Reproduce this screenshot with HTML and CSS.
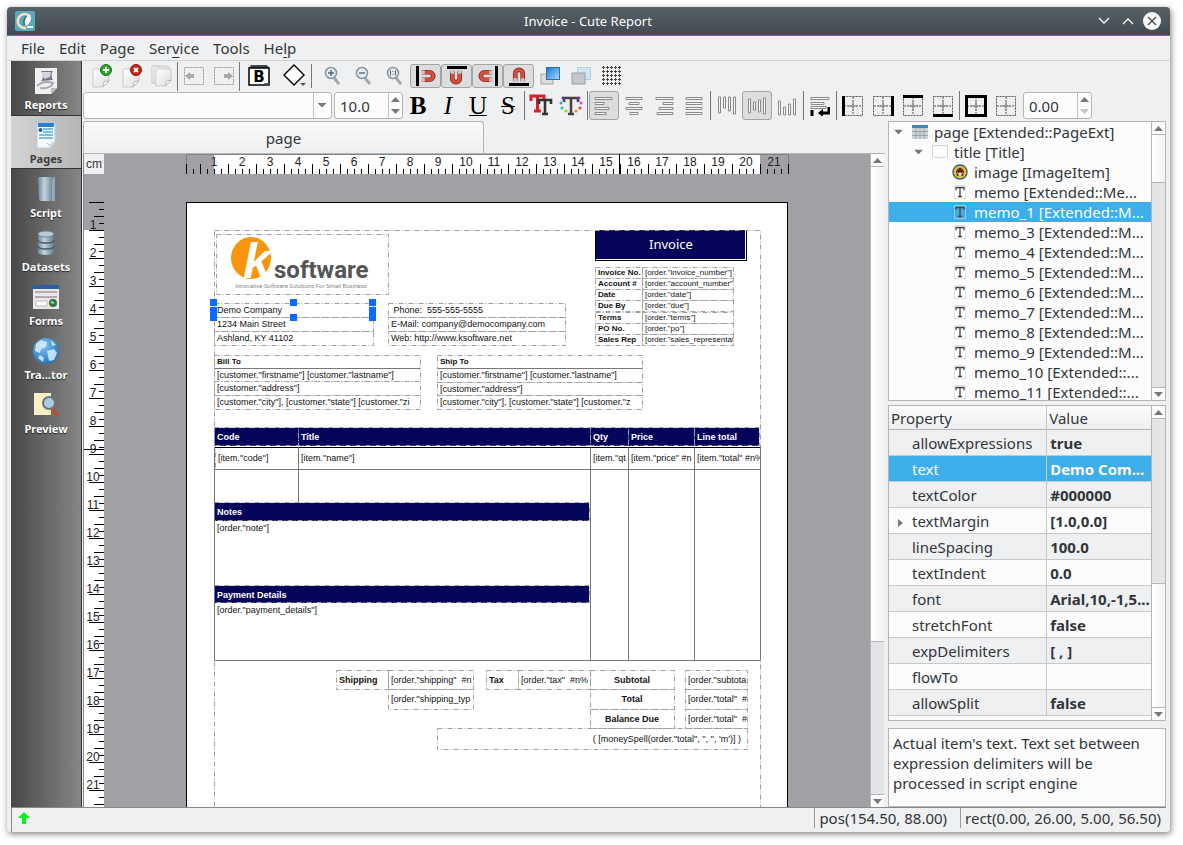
FILE: index.html
```
<!DOCTYPE html>
<html lang="en">
<head>
    <meta charset="UTF-8">
    <meta name="viewport" content="width=device-width, initial-scale=1.0">
    <title>Invoice - Cute Report</title>
    <link rel="stylesheet" href="styles.css">
</head>
<body>
    <!-- Shared icons -->
    <svg class="defs" aria-hidden="true">
        <defs>
            <linearGradient id="gPaper" x1="0" y1="0" x2="1" y2="1"><stop offset="0" stop-color="#fff"/><stop offset="1" stop-color="#dcdcdc"/></linearGradient>
            <linearGradient id="gBlue" x1="0" y1="0" x2="1" y2="1"><stop offset="0" stop-color="#1878d0"/><stop offset="1" stop-color="#a8dcff"/></linearGradient>
            <linearGradient id="gSteel" x1="0" y1="0" x2="1" y2="0"><stop offset="0" stop-color="#6f8797"/><stop offset=".4" stop-color="#c3d3de"/><stop offset="1" stop-color="#64798a"/></linearGradient>
            <radialGradient id="gGlobe" cx=".4" cy=".3" r=".8"><stop offset="0" stop-color="#7cc4f4"/><stop offset="1" stop-color="#1a68b4"/></radialGradient>
            <symbol id="paper" viewBox="0 0 18 20"><path d="M1 1h16v12l-6 6H1z" fill="url(#gPaper)" stroke="#c9c9c9"/><path d="M17 13q-5 0-5 1t-1 5z" fill="#fff" stroke="#b5b5b5"/></symbol>
            <symbol id="magnet" viewBox="0 0 16 14"><path d="M1 3h8a4 4 0 0 1 0 8H1" fill="none" stroke="#8e2a20" stroke-width="5"/><path d="M1 3h8a4 4 0 0 1 0 8H1" fill="none" stroke="#d9503f" stroke-width="3"/><path d="M0 1h4v4H0zM0 9h4v4H0z" fill="#c9c4d8"/></symbol>
            <symbol id="lens" viewBox="0 0 18 20"><path d="M10 12l5 6" stroke="#a9a9a9" stroke-width="3"/><circle cx="7" cy="7" r="5.500" fill="#e3edf2" stroke="#8795a0" stroke-width="1.500"/></symbol>
            <symbol id="cells" viewBox="0 0 22 22"><path d="M1.500 1.500h19v19h-19zM11 2v18M2 11h18" fill="none" stroke="#555" stroke-dasharray="2 1"/><path d="M6 11h10M11 6v10" stroke="#888"/></symbol>
            <symbol id="memo" viewBox="0 0 12 14"><path d="M.5 .5h11v13H.5z" fill="none" stroke="#d4d4dd" stroke-dasharray="2 1"/><path d="M2 5V2.500h8V5M6 2.500v9M4 11.500h4" fill="none" stroke="#444" stroke-width="1.300"/></symbol>
            <symbol id="up" viewBox="0 0 9 5"><path d="M0 5L4.500 0 9 5z" fill="#777"/></symbol>
            <symbol id="down" viewBox="0 0 9 5"><path d="M0 0l4.500 5L9 0z" fill="#777"/></symbol>
        </defs>
    </svg>

    <div class="window">
        <header class="titlebar">
            <svg width="20" height="20" viewBox="0 0 20 20"><rect width="20" height="20" rx="2" fill="#57a9bd"/><path d="M14 4.500A7 7 0 1 0 11 17" fill="none" stroke="#f1dfc3" stroke-width="2.600"/><path d="M15 3q3 8-4 12-4-6 4-12z" fill="#fff8e8"/><path d="M12 16h6" stroke="#fff8e8" stroke-width="2"/><path d="M9 14q-1-5 2-9" stroke="#3b4c50" stroke-width="1" fill="none"/></svg>
            <h1>Invoice - Cute Report</h1>
            <div class="winbtns">
                <button aria-label="Minimize"><svg width="12" height="8" viewBox="0 0 12 8"><path d="M1 1l5 5 5-5" fill="none" stroke="#fcfcfc" stroke-width="1.300"/></svg></button>
                <button aria-label="Maximize"><svg width="12" height="8" viewBox="0 0 12 8"><path d="M1 7l5-5 5 5" fill="none" stroke="#fcfcfc" stroke-width="1.300"/></svg></button>
                <button aria-label="Close"><svg width="18" height="18" viewBox="0 0 18 18"><circle cx="9" cy="9" r="9" fill="#fcfcfc"/><path d="M5 5l8 8M13 5l-8 8" stroke="#475057" stroke-width="1.500"/></svg></button>
            </div>
        </header>

        <nav class="menubar">
            <button>File</button>
            <button>Edit</button>
            <button>Page</button>
            <button>Ser<u>v</u>ice</button>
            <button>Tools</button>
            <button>He<u>l</u>p</button>
        </nav>

        <div class="main">
            <!-- Modules -->
            <nav class="modules">
                <button><svg width="26" height="28" viewBox="0 0 26 28"><path d="M2 1h22v20l-6 6H2z" fill="#f0f0f2"/><path d="M8 4h12q-3 4 0 9l-12 1q4-5 0-10z" fill="#77757f"/><path d="M9 5h9l-1 5-6 2z" fill="#d7d5dd"/><path d="M4 19q6-6 16-3-2 6-13 5" fill="none" stroke="#aaa8b2" stroke-width="2"/><path d="M24 21h-6v6z" fill="#bbb"/></svg>Reports</button>
                <button class="active"><svg width="26" height="28" viewBox="0 0 26 28"><path d="M4 2h18v19l-5 6H4z" fill="#f5faff" stroke="#b6cbdc"/><path d="M5 2h16v4H5z" fill="#2c7fce"/><path d="M10 8h10M10 11h10M6 14h14M6 17h14" stroke="#55a9e4" stroke-width="1.600"/><circle cx="7.500" cy="9" r="2" fill="#1761a8"/><path d="M14 22l3 3 3-4" fill="none" stroke="#a5b4c0"/></svg>Pages</button>
                <button><svg width="26" height="28" viewBox="0 0 26 28"><path d="M5 3q0-1 2-1h14q-2 2-2 5v18q0 1 2 1H8q-2 0-2-3z" fill="url(#gSteel)"/><path d="M19 7q0-5 3-5v24h-3z" fill="#8fa8c0"/></svg>Script</button>
                <button><svg width="26" height="28" viewBox="0 0 26 28"><path d="M5 5v18q0 3 8 3t8-3V5z" fill="url(#gSteel)"/><ellipse cx="13" cy="5" rx="8" ry="3" fill="#b9cbd5" stroke="#6f8592"/><path d="M5 11q0 3 8 3t8-3M5 17q0 3 8 3t8-3" fill="none" stroke="#3f5563" stroke-width="1.300"/></svg>Datasets</button>
                <button><svg width="26" height="28" viewBox="0 0 26 28"><path d="M0 2h26v24H0z" fill="#e8e8ea"/><path d="M0 2h26v4H0z" fill="#2d5ca6"/><path d="M2 9h22M2 14h22" stroke="#b9a9b5" stroke-width="2"/><path d="M3 18h11v5H3z" fill="#fff" stroke="#bbb"/><circle cx="20" cy="20" r="4" fill="#2f7a38"/><path d="M18 19l3 1" stroke="#a6dca9" stroke-width="2"/></svg>Forms</button>
                <button><svg width="28" height="28" viewBox="0 0 28 28"><circle cx="14" cy="14" r="13" fill="url(#gGlobe)"/><path d="M4 7l5-4 6 2-1 5-5 2-1 4-5-2zM15 14l7-2 3 4-3 7-5 1zM19 3l5 5-4 1zM8 18l4 3-1 4-5-4z" fill="#dceffb" opacity=".85"/></svg>Tra...tor</button>
                <button><svg width="26" height="28" viewBox="0 0 26 28"><path d="M1 2h17v22H1z" fill="#f7e3a0"/><path d="M1 2h17l-3 22H1z" fill="#fbefc4"/><path d="M19 17l6 8" stroke="#c24a2a" stroke-width="3"/><circle cx="16" cy="12" r="6" fill="#a9cbdc" stroke="#67767f" stroke-width="2"/></svg>Preview</button>
            </nav>

            <div class="content">
                <div class="toolbar upper">
                    <div class="group pages-group">
                        <button aria-label="New page"><svg width="24" height="24" viewBox="0 0 24 24"><use href="#paper" x="2" y="4" width="18" height="20"/><circle cx="16" cy="6" r="5.500" fill="#2fa22f" stroke="#1a701a"/><path d="M16 3v6M13 6h6" stroke="#fff" stroke-width="1.800"/></svg></button>
                        <button aria-label="Delete page"><svg width="24" height="24" viewBox="0 0 24 24"><use href="#paper" x="2" y="4" width="18" height="20"/><circle cx="16" cy="6" r="5.500" fill="#c22418" stroke="#8a130c"/><path d="M14 4l4 4M18 4l-4 4" stroke="#fff" stroke-width="1.800"/></svg></button>
                        <button aria-label="Clone page"><svg width="24" height="24" viewBox="0 0 24 24"><use href="#paper" x="1" y="1" width="17" height="19"/><use href="#paper" x="3" y="2" width="17" height="19"/><use href="#paper" x="5" y="4" width="17" height="19"/></svg></button>
                    </div>
                    <div class="group">
                        <button aria-label="Previous page"><svg width="22" height="20" viewBox="0 0 22 20"><rect x="1.500" y="1.500" width="19" height="17" fill="none" stroke="#999" stroke-dasharray="2 1"/><path d="M2 10l5-4v2h4v4H7v2z" fill="#aaa"/></svg></button>
                        <button aria-label="Next page"><svg width="22" height="20" viewBox="0 0 22 20"><rect x="1.500" y="1.500" width="19" height="17" fill="none" stroke="#999" stroke-dasharray="2 1"/><path d="M20 10l-5-4v2h-4v4h4v2z" fill="#aaa"/></svg></button>
                    </div>
                    <div class="group wide">
                        <button aria-label="Bands"><svg width="24" height="24" viewBox="0 0 24 24"><path d="M4 1h16l2 3H2z" fill="#444"/><rect x="2" y="4" width="20" height="17" fill="#fff" stroke="#000" stroke-width="1.500"/><text x="12" y="18" text-anchor="middle" class="ico-b">B</text><path d="M17 19h6l-3 3z" fill="#555"/></svg></button>
                        <button aria-label="Shapes"><svg width="24" height="24" viewBox="0 0 24 24"><path d="M12 1l10 10-10 10L2 11z" fill="#fff" stroke="#000" stroke-width="1.400"/><path d="M18 19h6l-3 3z" fill="#555"/></svg></button>
                    </div>
                    <div class="group roomy">
                        <button aria-label="Zoom in"><svg width="18" height="20" viewBox="0 0 18 20"><use href="#lens" width="18" height="20"/><path d="M4 7h6M7 4v6" stroke="#55636d" stroke-width="1.400"/></svg></button>
                        <button aria-label="Zoom out"><svg width="18" height="20" viewBox="0 0 18 20"><use href="#lens" width="18" height="20"/><path d="M4 7h6" stroke="#55636d" stroke-width="1.400"/></svg></button>
                        <button aria-label="Zoom 1:1"><svg width="18" height="20" viewBox="0 0 18 20"><use href="#lens" width="18" height="20"/><path d="M4.500 4.500v5M9.500 4.500v5M7 5v1M7 8v1" stroke="#55636d"/></svg></button>
                        <button class="on" aria-label="Snap left"><svg width="22" height="22" viewBox="0 0 22 22"><path d="M1 1h3v20H1z"/><use href="#magnet" x="6" y="4" width="15" height="14"/></svg></button>
                        <button class="on" aria-label="Snap top"><svg width="22" height="22" viewBox="0 0 22 22"><path d="M1 1h20v3H1z"/><use href="#magnet" x="4" y="6" width="15" height="14" transform="rotate(90 11 12)"/></svg></button>
                        <button class="on" aria-label="Snap right"><svg width="22" height="22" viewBox="0 0 22 22"><path d="M18 1h3v20h-3z"/><use href="#magnet" x="6" y="4" width="15" height="14" transform="rotate(180 11 11)"/></svg></button>
                        <button class="on" aria-label="Snap bottom"><svg width="22" height="22" viewBox="0 0 22 22"><path d="M1 18h20v3H1z"/><use href="#magnet" x="4" y="3" width="15" height="14" transform="rotate(-90 11 10)"/></svg></button>
                        <button aria-label="Bring to front"><svg width="20" height="20" viewBox="0 0 20 20"><rect x="1" y="8" width="12" height="10" fill="#dcdcdc" stroke="#a5a5a5"/><rect x="6.500" y="1.500" width="13" height="12" fill="url(#gBlue)" stroke="#2c6fab"/></svg></button>
                        <button aria-label="Send to back"><svg width="20" height="20" viewBox="0 0 20 20"><rect x="6.500" y="1.500" width="13" height="12" fill="#cfe6f5" stroke="#b0cfe2"/><rect x="1" y="7" width="13" height="11" fill="#c3c6cb" stroke="#9da1a6"/></svg></button>
                        <button aria-label="Grid"><svg width="20" height="20" viewBox="0 0 20 20"><path d="M0 1.500h20M0 5.500h20M0 9.500h20M0 13.500h20M0 17.500h20" stroke="#444" stroke-dasharray="3 1"/><path d="M1.500 0v20M5.500 0v20M9.500 0v20M13.500 0v20M17.500 0v20" stroke="#444" stroke-dasharray="1 1"/></svg></button>
                    </div>
                </div>

                <div class="toolbar lower">
                    <select class="font-family" aria-label="Font"><option></option></select>
                    <div class="spin">
                        <input type="text" value="10.0" aria-label="Font size">
                        <div class="steps"><button aria-label="Larger"><svg width="9" height="5"><use href="#up"/></svg></button><button aria-label="Smaller"><svg width="9" height="5"><use href="#down"/></svg></button></div>
                    </div>
                    <div class="group letters">
                        <button class="b">B</button>
                        <button class="i">I</button>
                        <button class="u">U</button>
                        <button class="s">S</button>
                    </div>
                    <div class="group">
                        <button aria-label="Font dialog"><svg width="24" height="24" viewBox="0 0 24 24"><path d="M2 7V2h13v5M8.500 2v15M5 17h7" fill="none" stroke="#d3222a" stroke-width="3"/><path d="M10 10V6h12v4M16 6v14M13 20h6" fill="none" stroke="#333" stroke-width="2.600"/></svg></button>
                        <button aria-label="Text colour"><svg width="24" height="24" viewBox="0 0 24 24"><path d="M5 8V4h14v4M12 4v16M9 20h6" fill="none" stroke="#444" stroke-width="2.600"/><g><circle cx="4" cy="4" r="1.500" fill="#5b37d8"/><circle cx="2" cy="9" r="1.500" fill="#26a7e0"/><circle cx="3" cy="14" r="1.500" fill="#27c98a"/><circle cx="7" cy="17" r="1.500" fill="#8fd62a"/><circle cx="20" cy="4" r="1.500" fill="#a229d8"/><circle cx="22" cy="9" r="1.500" fill="#e83cc4"/><circle cx="21" cy="14" r="1.500" fill="#e8373c"/><circle cx="17" cy="17" r="1.500" fill="#f08a24"/></g></svg></button>
                    </div>
                    <div class="group lines">
                        <button class="on" aria-label="Align left"><svg width="20" height="20" viewBox="0 0 20 20"><path d="M1 1.500h17v2H1zM1 6.500h9v2H1zM1 11.500h14v2H1zM1 16.500h11v2H1z"/></svg></button>
                        <button aria-label="Align centre"><svg width="20" height="20" viewBox="0 0 20 20"><path d="M2 1.500h16v2H2zM5 6.500h10v2H5zM2 11.500h16v2H2zM6 16.500h8v2H6z"/></svg></button>
                        <button aria-label="Align right"><svg width="20" height="20" viewBox="0 0 20 20"><path d="M2 1.500h17v2H2zM9 6.500h10v2H9zM5 11.500h14v2H5zM3 16.500h16v2H3z"/></svg></button>
                        <button aria-label="Justify"><svg width="20" height="20" viewBox="0 0 20 20"><path d="M2 1.500h16v2H2zM2 6.500h16v2H2zM2 11.500h16v2H2zM2 16.500h16v2H2z"/></svg></button>
                    </div>
                    <div class="group lines">
                        <button aria-label="Align top"><svg width="20" height="20" viewBox="0 0 20 20"><path d="M1.500 1h2v16h-2zM6.500 1h2v11h-2zM11.500 1h2v14h-2zM16.500 1h2v17h-2z"/></svg></button>
                        <button class="on" aria-label="Align middle"><svg width="20" height="20" viewBox="0 0 20 20"><path d="M1.500 3h2v14h-2zM6.500 6h2v8h-2zM11.500 4h2v12h-2zM16.500 2h2v16h-2z"/></svg></button>
                        <button aria-label="Align bottom"><svg width="20" height="20" viewBox="0 0 20 20"><path d="M1.500 5h2v14h-2zM6.500 11h2v8h-2zM11.500 8h2v11h-2zM16.500 3h2v16h-2z"/></svg></button>
                    </div>
                    <div class="group lines">
                        <button aria-label="Word wrap"><svg width="20" height="20" viewBox="0 0 20 20"><path d="M1 1.500h18v2H1zM1 6.500h13v2H1zM1 10.500h15v2H1z"/><path class="arrow" d="M2 14v6M19 11v6h-8"/><path class="tip" d="M8 17l5-4v8z"/></svg></button>
                    </div>
                    <div class="group">
                        <button aria-label="Left border"><svg width="22" height="22"><use href="#cells"/><path d="M0 1h3v20H0z"/></svg></button>
                        <button aria-label="Right border"><svg width="22" height="22"><use href="#cells"/><path d="M19 1h3v20h-3z"/></svg></button>
                        <button aria-label="Top border"><svg width="22" height="22"><use href="#cells"/><path d="M1 0h20v3H1z"/></svg></button>
                        <button aria-label="Bottom border"><svg width="22" height="22"><use href="#cells"/><path d="M1 19h20v3H1z"/></svg></button>
                    </div>
                    <div class="group">
                        <button aria-label="All borders"><svg width="22" height="22"><use href="#cells"/><path d="M1.500 1.500h19v19h-19z" fill="none" stroke="#000" stroke-width="3"/></svg></button>
                        <button aria-label="No borders"><svg width="22" height="22"><use href="#cells"/></svg></button>
                    </div>
                    <div class="spin">
                        <input type="text" value="0.00" aria-label="Border width">
                        <div class="steps"><button aria-label="Wider"><svg width="9" height="5"><use href="#up"/></svg></button><button aria-label="Thinner" disabled><svg width="9" height="5"><use href="#down"/></svg></button></div>
                    </div>
                </div>

                <div class="work">
                    <section class="editor">
                        <div class="tabs"><button>page</button></div>
                        <div class="designer">
                            <div class="unit">cm</div>
                            <div class="ruler-top"><svg id="rulerTop" width="603" height="20"></svg></div>
                            <div class="ruler-left"><svg id="rulerLeft" width="20" height="840"></svg></div>
                            <div class="canvas">
                                <div class="sheet" id="reportPage">
                                    <svg id="frames" class="frames" width="602" height="840"></svg>
                                    <svg class="logo" width="172" height="60" viewBox="0 0 172 60">
                                        <ellipse cx="35" cy="24" rx="20" ry="21" fill="#f7960e"/>
                                        <text x="27" y="44" class="logo-k">k</text>
                                        <text x="58" y="44" class="logo-name">software</text>
                                        <text x="85" y="54" text-anchor="middle" class="logo-line">Innovative Software Solutions For Small Business</text>
                                    </svg>
                                </div>
                            </div>
                            <div class="scroll editor-scroll"><button aria-label="Scroll up"><svg width="9" height="5"><use href="#up"/></svg></button><div class="thumb"></div><div class="trough"></div><button aria-label="Scroll down"><svg width="9" height="5"><use href="#down"/></svg></button></div>
                        </div>
                    </section>

                    <aside class="panels">
                        <div class="panel tree">
                            <ul>
                                <li class="l0"><svg width="9" height="6" viewBox="0 0 9 5"><use href="#down"/></svg><svg width="16" height="14" viewBox="0 0 16 14"><path d="M0 0h16v14H0z" fill="#cfd6db"/><path d="M0 0h16v3H0z" fill="#3c87b8"/><path d="M0 6.500h16M0 10.500h16M4 3v11M8 3v11M12 3v11" stroke="#96a3ab"/></svg>page [Extended::PageExt]</li>
                                <li class="l1"><svg width="9" height="6" viewBox="0 0 9 5"><use href="#down"/></svg><svg width="16" height="14" viewBox="0 0 16 14"><path d="M.5 .5h15v11q-7 3-15 0z" fill="#fff" stroke="#d3d0d3"/></svg>title [Title]</li>
                                <li class="l2"><svg width="16" height="16" viewBox="0 0 16 16"><circle cx="8" cy="8" r="7" fill="#e9bd35" stroke="#3f6684" stroke-width="1.500"/><path d="M4 7q4-7 8 0l-1 5H5z" fill="#663420"/><path d="M5 8h6l-2 4H7z" fill="#f0cda0"/><circle cx="6.500" cy="8" r="1" fill="#111"/><circle cx="9.500" cy="8" r="1" fill="#111"/></svg>image [ImageItem]</li>
                                <li class="l2"><svg width="12" height="14"><use href="#memo"/></svg>memo [Extended::Me...</li>
                                <li class="l2 selected"><svg width="12" height="14"><use href="#memo"/></svg>memo_1 [Extended::M...</li>
                                <li class="l2"><svg width="12" height="14"><use href="#memo"/></svg>memo_3 [Extended::M...</li>
                                <li class="l2"><svg width="12" height="14"><use href="#memo"/></svg>memo_4 [Extended::M...</li>
                                <li class="l2"><svg width="12" height="14"><use href="#memo"/></svg>memo_5 [Extended::M...</li>
                                <li class="l2"><svg width="12" height="14"><use href="#memo"/></svg>memo_6 [Extended::M...</li>
                                <li class="l2"><svg width="12" height="14"><use href="#memo"/></svg>memo_7 [Extended::M...</li>
                                <li class="l2"><svg width="12" height="14"><use href="#memo"/></svg>memo_8 [Extended::M...</li>
                                <li class="l2"><svg width="12" height="14"><use href="#memo"/></svg>memo_9 [Extended::M...</li>
                                <li class="l2"><svg width="12" height="14"><use href="#memo"/></svg>memo_10 [Extended::...</li>
                                <li class="l2"><svg width="12" height="14"><use href="#memo"/></svg>memo_11 [Extended::...</li>
                            </ul>
                            <div class="scroll tree-scroll"><button aria-label="Scroll up"><svg width="9" height="5"><use href="#up"/></svg></button><div class="thumb"></div><div class="trough"></div><button aria-label="Scroll down"><svg width="9" height="5"><use href="#down"/></svg></button></div>
                        </div>

                        <div class="panel props">
                            <table>
                                <thead>
                                    <tr><th>Property</th><th>Value</th></tr>
                                </thead>
                                <tbody>
                                    <tr><td>allowExpressions</td><td>true</td></tr>
                                    <tr class="selected"><td>text</td><td>Demo Com...</td></tr>
                                    <tr><td>textColor</td><td>#000000</td></tr>
                                    <tr class="branch"><td>textMargin</td><td>[1.0,0.0]</td></tr>
                                    <tr><td>lineSpacing</td><td>100.0</td></tr>
                                    <tr><td>textIndent</td><td>0.0</td></tr>
                                    <tr><td>font</td><td>Arial,10,-1,5...</td></tr>
                                    <tr><td>stretchFont</td><td>false</td></tr>
                                    <tr><td>expDelimiters</td><td>[ , ]</td></tr>
                                    <tr><td>flowTo</td><td></td></tr>
                                    <tr><td>allowSplit</td><td>false</td></tr>
                                </tbody>
                            </table>
                            <div class="scroll props-scroll"><button aria-label="Scroll up"><svg width="9" height="5"><use href="#up"/></svg></button><div class="trough"></div><div class="thumb"></div><button aria-label="Scroll down"><svg width="9" height="5"><use href="#down"/></svg></button></div>
                        </div>

                        <p class="panel hint">Actual item's text. Text set between expression delimiters will be processed in script engine</p>
                    </aside>
                </div>
            </div>
        </div>

        <footer class="statusbar">
            <svg width="12" height="12" viewBox="0 0 12 12"><path d="M6 0l6 6H8v6H4V6H0z" fill="#00f51a"/></svg>
            <span class="pos">pos(154.50, 88.00)</span>
            <span class="rect">rect(0.00, 26.00, 5.00, 56.50)</span>
        </footer>
    </div>

    <script src="script.js"></script>
</body>
</html>
```
FILE: styles.css
```
* {
    box-sizing: border-box;
}

body {
    margin: 0;
    padding: 7px 13px 13px 7px;
    height: 100vh;
    display: flex;
    background: #fff;
    font-family: "Noto Sans", sans-serif;
    font-size: 15px;
    line-height: 20px;
    color: #31363b;
}

button,
input,
select {
    font: inherit;
    color: inherit;
    margin: 0;
    padding: 0;
    border: 0;
    background: none;
}

.defs {
    position: absolute;
    width: 0;
    height: 0;
}

.window {
    flex: 1;
    min-width: 0;
    display: flex;
    flex-direction: column;
    background: #eff0f1;
    border-radius: 4px;
    box-shadow: 1px 2px 6px rgba(0, 0, 0, 0.5);
}

/* Title bar */
.titlebar {
    height: 29px;
    flex: none;
    display: flex;
    align-items: center;
    padding: 0 9px 0 8px;
    background: linear-gradient(#566168, #434b51);
    border-bottom: 1px solid #3a87b0;
    border-radius: 4px 4px 0 0;
    color: #fcfcfc;
}

.titlebar h1 {
    flex: 1;
    margin: 0;
    padding-left: 46px;
    font-size: 13px;
    font-weight: normal;
    text-align: center;
}

.winbtns {
    display: flex;
    align-items: center;
    gap: 6px;
}

.winbtns button {
    width: 18px;
    display: flex;
    justify-content: center;
}

/* Menu */
.menubar {
    height: 25px;
    flex: none;
    display: flex;
    padding: 0 7px;
    border-bottom: 1px solid #d2d3d4;
}

.menubar button {
    padding: 0 7px;
}

.menubar u {
    text-underline-offset: 3px;
}

.main {
    flex: 1;
    min-height: 0;
    display: flex;
    padding: 0 4px;
}

/* Modules */
.modules {
    width: 71px;
    flex: none;
    background: linear-gradient(to right, #484848, #868686);
    border-right: 1px solid #333;
}

.modules button {
    display: flex;
    flex-direction: column;
    align-items: center;
    justify-content: flex-end;
    gap: 2px;
    width: 100%;
    height: 54px;
    padding-bottom: 2px;
    font-size: 11px;
    line-height: 16px;
    font-weight: bold;
    color: #fff;
    text-shadow: 0 1px 1px #222;
}

.modules .active {
    padding-bottom: 1px;
    background: linear-gradient(to right, #d4d4d4, #b5b5b5);
    border-top: 1px solid #333;
    border-bottom: 1px solid #333;
    color: #3d3d3d;
    text-shadow: none;
}

.content {
    flex: 1;
    min-width: 0;
    display: flex;
    flex-direction: column;
    padding-left: 1px;
}

/* Toolbars */
.toolbar {
    height: 30px;
    flex: none;
    display: flex;
    align-items: center;
}

.lower {
    height: 29px;
}

.group {
    display: flex;
}

.group + .group {
    border-left: 1px solid #777;
    margin-left: 1px;
    padding-left: 1px;
}

.upper .group + .group {
    margin-left: 0;
}

.group button {
    width: 30px;
    height: 29px;
    display: flex;
    align-items: center;
    justify-content: center;
    border: 1px solid transparent;
    border-radius: 3px;
}

.group .on {
    background: #dcddde;
    border-color: #a3a4a5;
}

.pages-group {
    padding-left: 4px;
}

.wide button {
    width: 35px;
}

.upper .group.roomy {
    padding-left: 5px;
}

.roomy button {
    width: 31px;
    height: 24px;
}

.lines path {
    fill: #f6f6f6;
    stroke: #8b8b8b;
    stroke-width: 1px;
}

.lines .arrow {
    fill: none;
    stroke: #000;
    stroke-width: 3px;
}

.lines .tip {
    fill: #000;
    stroke: none;
}

.ico-b {
    font: bold 15px "DejaVu Sans", sans-serif;
}

.letters button {
    font-family: "Liberation Serif", serif;
    font-size: 25px;
    line-height: 26px;
    color: #000;
}

.letters .b {
    font-weight: bold;
}

.letters .i {
    font-style: italic;
}

.letters .u {
    text-decoration: underline;
    text-decoration-thickness: 1px;
}

.letters .s {
    text-decoration: line-through;
    text-decoration-thickness: 1px;
}

.font-family {
    width: 249px;
    height: 27px;
    appearance: none;
    border: 1px solid #b4b5b6;
    border-radius: 3px;
    background:
        linear-gradient(to top right, transparent 50%, #777 50%) 234px 10px / 4px 5px no-repeat,
        linear-gradient(to top left, transparent 50%, #777 50%) 238px 10px / 4px 5px no-repeat,
        linear-gradient(#c0c1c2, #c0c1c2) 229px 0 / 1px 100% no-repeat,
        #fcfcfc;
}

.spin {
    width: 69px;
    height: 27px;
    display: flex;
    margin: 0 0 0 2px;
    border: 1px solid #b4b5b6;
    border-radius: 3px;
    background: #fcfcfc;
}

.spin input {
    flex: 1;
    min-width: 0;
    padding-left: 5px;
}

.steps {
    width: 14px;
    display: flex;
    flex-direction: column;
    border-left: 1px solid #c0c1c2;
}

.steps button {
    flex: 1;
    display: flex;
    align-items: center;
    justify-content: center;
}

.steps button:disabled {
    opacity: 0.4;
}

.work {
    flex: 1;
    min-height: 0;
    display: flex;
    gap: 3px;
}

/* Designer */
.editor {
    flex: 1;
    min-width: 0;
    display: flex;
    flex-direction: column;
    padding-top: 1px;
}

.tabs {
    flex: none;
    border-bottom: 1px solid #b4b5b6;
    background: #eff0f1;
}

.tabs button {
    width: 50%;
    height: 32px;
    border: 1px solid #b4b5b6;
    border-bottom: 0;
    border-radius: 3px 3px 0 0;
    background: linear-gradient(#fafafa, #eeeff0);
}

.designer {
    flex: 1;
    min-height: 0;
    display: grid;
    grid-template-columns: 20px 1fr 14px;
    grid-template-rows: 20px 1fr;
    margin-right: 1px;
    border-left: 1px solid #888;
    background: #a1a0a4;
}

.unit {
    background: #eff0f1;
    font-family: "Liberation Sans", sans-serif;
    font-size: 12px;
    text-align: center;
}

.ruler-top {
    display: flex;
    justify-content: center;
    overflow: hidden;
}

.ruler-top svg {
    flex: none;
}

.ruler-left {
    grid-row: 2;
    padding-top: 28px;
    overflow: hidden;
}

.ruler-text {
    font: 12px "Liberation Sans", sans-serif;
    fill: #222;
}

.canvas {
    grid-row: 2;
    grid-column: 2;
    display: flex;
    justify-content: center;
    padding-top: 28px;
    overflow: hidden;
}

.editor-scroll {
    grid-row: 1 / 3;
    grid-column: 3;
}

.sheet {
    position: relative;
    flex: none;
    width: 602px;
    height: 840px;
    background: #fff;
    box-shadow: inset 0 0 0 1px #000;
    font-family: "Liberation Sans", sans-serif;
    font-size: 9px;
    color: #111;
}

.frames {
    position: absolute;
    left: 0;
    top: 0;
    z-index: 1;
}

.item {
    position: absolute;
    display: flex;
    align-items: center;
    padding: 0 3px;
    overflow: hidden;
    line-height: 12px;
    white-space: pre;
}

.item.bold {
    font-weight: bold;
}

.item.small {
    font-size: 8px;
}

.item.center {
    justify-content: center;
}

.item.right {
    justify-content: flex-end;
    padding-right: 6px;
}

.item.head {
    background: #05055b;
    color: #fff;
    font-weight: bold;
}

.item.invoice {
    justify-content: center;
    padding-bottom: 3px;
    background: #05055b;
    border: 1px solid #000;
    box-shadow: inset -1px -1px 0 #fff;
    font-family: "Noto Sans", sans-serif;
    font-size: 13px;
    color: #fff;
}

.handle {
    position: absolute;
    z-index: 2;
    width: 7px;
    height: 7px;
    background: #0a6cff;
}

.logo {
    position: absolute;
    left: 30px;
    top: 32px;
}

.logo-k {
    font: italic bold 50px "Liberation Sans", sans-serif;
    fill: #fff;
}

.logo-name {
    font: bold 24px Roboto, sans-serif;
    fill: #555;
}

.logo-line {
    font: 6px Roboto, sans-serif;
    fill: #888;
}

/* Scroll bars */
.scroll {
    width: 14px;
    flex: none;
    display: flex;
    flex-direction: column;
    border-left: 1px solid #b4b5b6;
    background: #e3e4e5;
}

.scroll button {
    height: 13px;
    display: flex;
    align-items: center;
    justify-content: center;
    background: #fcfcfc;
    border-bottom: 1px solid #b4b5b6;
}

.scroll button:last-child {
    border-top: 1px solid #b4b5b6;
    border-bottom: 0;
}

.thumb {
    background: linear-gradient(to right, #fff, #f2f3f4);
}

.trough {
    background: #e3e4e5;
}

.thumb + .trough,
.trough + .thumb {
    border-top: 1px solid #b4b5b6;
}

.editor-scroll .thumb {
    flex: 25;
}

.editor-scroll .trough {
    flex: 8;
}

.tree-scroll .thumb {
    flex: 3;
}

.tree-scroll .trough {
    flex: 13;
}

.props-scroll .trough {
    flex: 4;
}

.props-scroll .thumb {
    flex: 3;
}

/* Right side */
.panels {
    width: 278px;
    flex: none;
    display: flex;
    flex-direction: column;
    padding-top: 1px;
}

.panel {
    display: flex;
    border: 1px solid #b4b5b6;
    background: #fcfcfc;
    overflow: hidden;
}

.tree {
    height: 280px;
}

.tree ul {
    flex: 1;
    min-width: 0;
    margin: 0;
    padding: 0;
    list-style: none;
}

.tree li {
    height: 20px;
    display: flex;
    align-items: center;
    white-space: nowrap;
}

.l0 {
    padding-left: 5px;
    gap: 6px;
}

.l0 svg + svg,
.l1 svg + svg {
    margin-left: 3px;
}

.l1 {
    padding-left: 25px;
    gap: 6px;
}

.l2 {
    padding-left: 63px;
    gap: 6px;
}

.l2 svg {
    width: 16px;
}

.selected,
.props tbody .selected {
    background: #3daee9;
    color: #fcfcfc;
}

.props {
    margin-top: 4px;
    height: 316px;
}

.props table {
    flex: 1;
    min-width: 0;
    width: 100%;
    align-self: flex-start;
    table-layout: fixed;
    border-collapse: separate;
    border-spacing: 0;
    white-space: nowrap;
}

.props th {
    height: 24px;
    padding: 0 2px;
    border-bottom: 1px solid #b4b5b6;
    background: linear-gradient(#fcfcfc, #eeeff0);
    font-weight: normal;
    text-align: left;
}

.props th:first-child {
    width: 60%;
}

.props td {
    height: 26px;
    padding: 0 3px;
    border-bottom: 1px solid #c6c7c8;
    overflow: hidden;
}

.props th + th,
.props td + td {
    border-left: 1px solid #c6c7c8;
}

.props td:first-child {
    padding-left: 23px;
}

.props td + td {
    font-weight: bold;
}

.props tbody tr:nth-child(odd) {
    background: #eff0f1;
}

.props .branch td:first-child {
    padding-left: 9px;
}

.branch td:first-child::before {
    content: "";
    display: inline-block;
    margin-right: 9px;
    border: 4px solid transparent;
    border-left: 5px solid #777;
    border-right: 0;
}

.hint {
    flex: 1;
    margin: 7px 0 0;
    padding: 4px;
}

/* Status bar */
.statusbar {
    height: 25px;
    flex: none;
    display: flex;
    align-items: center;
    margin: 0 4px;
    padding: 0 0 4px 6px;
    border-top: 1px solid #888;
    border-left: 1px solid #888;
}

.pos,
.rect {
    padding: 0 5px 0 4px;
    border-left: 1px solid #999;
}

.pos {
    margin-left: auto;
    padding-right: 13px;
}
```
FILE: script.js
```
const NS = 'http://www.w3.org/2000/svg';

function draw(parent, name, attrs, text) {
    const el = document.createElementNS(NS, name);
    for (const key in attrs) el.setAttribute(key, attrs[key]);
    if (text) el.textContent = text;
    parent.appendChild(el);
}

// Rulers: 28px per cm, 4 ticks each, grey where the page margins are
const rulerTop = document.getElementById('rulerTop');
draw(rulerTop, 'rect', { x: 0.5, y: 0.5, width: 602, height: 20, fill: 'none', stroke: '#808080' });
draw(rulerTop, 'rect', { x: 28, y: 1, width: 546, height: 19, fill: '#fff' });
for (let i = 0; i <= 86; i++) {
    const len = i % 4 === 2 || i === 0 ? 10 : 5;
    draw(rulerTop, 'rect', { x: i * 7, y: 20 - len, width: 1, height: len, fill: '#000' });
    if (i % 4 === 0 && i) draw(rulerTop, 'text', { x: i * 7, y: 12, 'text-anchor': 'middle', class: 'ruler-text' }, i / 4);
}
draw(rulerTop, 'rect', { x: 433, y: 0, width: 1, height: 20, fill: '#000' });

const rulerLeft = document.getElementById('rulerLeft');
draw(rulerLeft, 'rect', { x: 0, y: 28, width: 20, height: 812, fill: '#fff' });
for (let i = 0; i < 88; i++) {
    const len = i % 2 ? 5 : i % 4 ? 10 : 15;
    draw(rulerLeft, 'rect', { x: 20 - len, y: i * 7, width: len, height: 1, fill: '#000' });
    if (i % 4 === 0 && i) draw(rulerLeft, 'text', { x: 9, y: i * 7 - 1, 'text-anchor': 'middle', class: 'ruler-text' }, i / 4);
}
draw(rulerLeft, 'rect', { x: 0, y: 247, width: 20, height: 1, fill: '#000' });

// Report items: x, y, width, height, text, classes
const items = [
    [30, 32, 172, 60, ''],
    [28, 101, 159, 14, 'Demo Company'],
    [28, 115, 159, 14, '1234 Main Street'],
    [28, 129, 159, 14, 'Ashland, KY 41102'],
    [202, 101, 177, 14, ' Phone:  555-555-5555'],
    [202, 115, 177, 14, 'E-Mail: company@democompany.com'],
    [202, 129, 177, 14, 'Web: http://www.ksoftware.net'],
    [28, 153, 206, 13, 'Bill To', 'bold small'],
    [28, 166, 206, 13, '[customer."firstname"] [customer."lastname"]'],
    [28, 179, 206, 14, '[customer."address"]'],
    [28, 193, 206, 14, '[customer."city"], [customer."state"] [customer."zi'],
    [251, 153, 205, 13, 'Ship To', 'bold small'],
    [251, 166, 205, 14, '[customer."firstname"] [customer."lastname"]'],
    [251, 180, 205, 13, '[customer."address"]'],
    [251, 193, 205, 14, '[customer."city"], [customer."state"] [customer."z'],
    [28, 225, 84, 18, 'Code', 'head'],
    [112, 225, 292, 18, 'Title', 'head'],
    [404, 225, 38, 18, 'Qty', 'head'],
    [442, 225, 66, 18, 'Price', 'head'],
    [508, 225, 65, 18, 'Line total', 'head'],
    [29, 245, 83, 22, '[item."code"]'],
    [112, 245, 292, 22, '[item."name"]'],
    [404, 245, 38, 22, '[item."qt'],
    [442, 245, 66, 22, '[item."price" #n'],
    [508, 245, 66, 22, '[item."total" #n%'],
    [28, 300, 375, 18, 'Notes', 'head'],
    [28, 320, 376, 12, '[order."note"]', 'open'],
    [28, 383, 375, 17, 'Payment Details', 'head'],
    [28, 402, 376, 12, '[order."payment_details"]', 'open'],
    [150, 468, 52, 19, 'Shipping', 'bold'],
    [202, 468, 85, 19, '[order."shipping"  #n'],
    [202, 487, 85, 20, '[order."shipping_typ'],
    [300, 468, 32, 19, 'Tax', 'bold'],
    [332, 468, 72, 19, '[order."tax"  #n%'],
    [404, 468, 84, 19, 'Subtotal', 'bold center'],
    [404, 487, 84, 20, 'Total', 'bold center'],
    [404, 507, 84, 19, 'Balance Due', 'bold center'],
    [499, 468, 62, 19, '[order."subtota'],
    [499, 487, 62, 20, '[order."total"  #'],
    [499, 507, 62, 19, '[order."total"  #'],
    [251, 526, 310, 21, '( [moneySpell(order."total", \'\', \'\', \'m\')] )', 'right']
];

const info = [
    [65, 'Invoice No.', 'invoice_number"]'],
    [76, 'Account #', 'account_number"'],
    [87, 'Date', 'date"]'],
    [98, 'Due By', 'due"]'],
    [110, 'Terms', 'terms"]'],
    [121, 'PO No.', 'po"]'],
    [132, 'Sales Rep', 'sales_representat']
];
for (const [y, label, field] of info) {
    items.push([409, y, 47, 11, label, 'bold small']);
    items.push([456, y, 91, 11, '[order."' + field, 'small']);
}

const page = document.getElementById('reportPage');
const frames = document.getElementById('frames');

function frame(x, y, w, h) {
    draw(frames, 'rect', { x: x + 0.5, y: y + 0.5, width: w, height: h, fill: 'none', stroke: '#a0a0a0', 'stroke-dasharray': '5 2 1 2' });
}

function line(x1, y1, x2, y2, color) {
    draw(frames, 'path', { d: `M${x1 + 0.5} ${y1 + 0.5}L${x2 + 0.5} ${y2 + 0.5}`, stroke: color || '#777', fill: 'none' });
}

function place(el, x, y, w, h) {
    el.style.left = x + 'px';
    el.style.top = y + 'px';
    if (w) el.style.width = w + 'px';
    if (h) el.style.height = h + 'px';
    page.appendChild(el);
}

for (const [x, y, w, h, text, cls] of items) {
    if (cls !== 'open') frame(x, y, w, h);
    if (!text) continue;
    const el = document.createElement('div');
    el.className = 'item ' + (cls || '');
    el.textContent = text;
    place(el, x, cls === 'head' ? y + 1 : y, w, h);
}

const title = document.createElement('div');
title.className = 'item invoice';
title.textContent = 'Invoice';
place(title, 409, 28, 152, 31);

// Bands and solid borders
frame(28, 28, 546, 812);
line(28, 166, 234, 166);
line(251, 166, 456, 166);
line(28, 245, 574, 245, '#000');
line(28, 267, 574, 267);
line(28, 458, 574, 458);
line(28, 245, 28, 458);
line(112, 245, 112, 300);
for (const x of [404, 442, 508, 574]) line(x, 245, x, 458);

// Selection handles
for (const [x, y] of [[24, 97], [24, 105], [24, 112], [104, 97], [104, 112], [183, 97], [183, 105], [183, 112]]) {
    const h = document.createElement('div');
    h.className = 'handle';
    place(h, x, y);
}
```
